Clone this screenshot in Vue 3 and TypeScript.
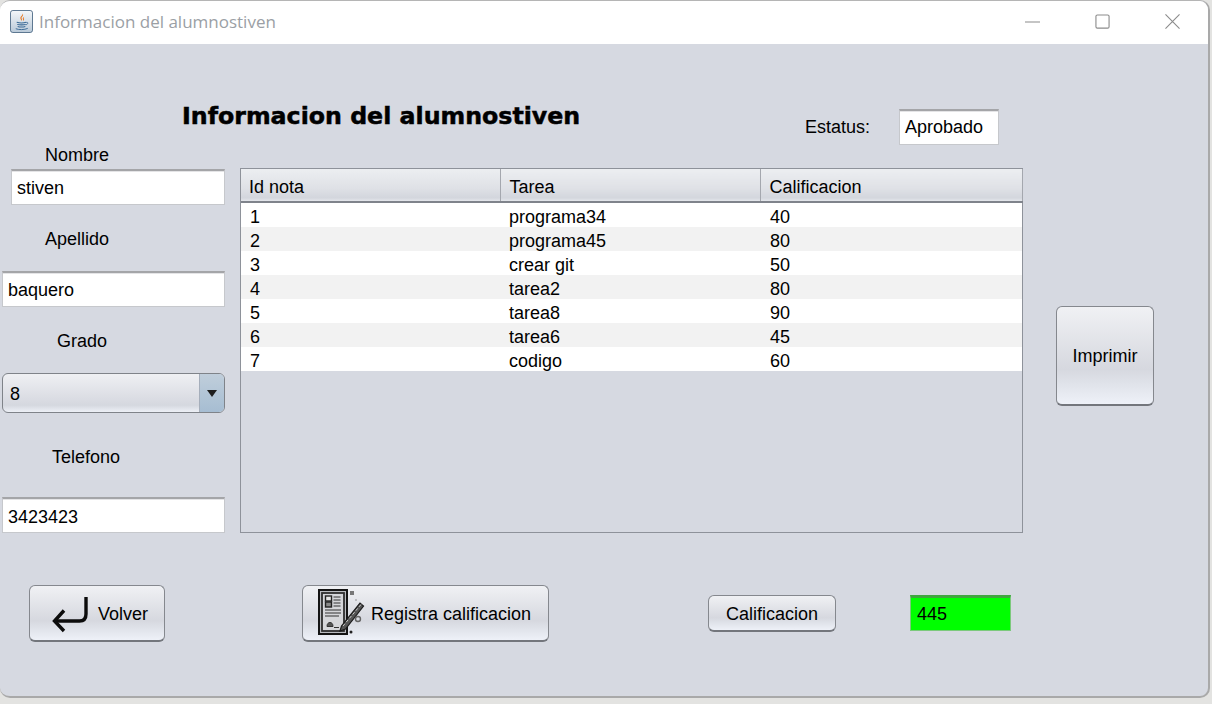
<template>
  <div class="window">
    <header class="titlebar">
      <svg class="java-icon" viewBox="0 0 24 24" aria-hidden="true">
        <defs>
          <linearGradient id="javaBg" x1="0" y1="0" x2="0" y2="1">
            <stop offset="0" stop-color="#f4f7fa" />
            <stop offset="1" stop-color="#b9c9d8" />
          </linearGradient>
        </defs>
        <rect x="0.5" y="0.5" width="23" height="23" rx="2.5" fill="url(#javaBg)" stroke="#56718c" />
        <path d="M13 3c1.500 2-3 3.500-2 6 .4 1 1.200 1.500 1.200 2.500 1.300-1.500-1-2.500.2-4.200C13.300 6 14.500 5 13 3z" fill="#e8761f" />
        <path d="M15 7c-1.500.8-2 1.600-1.400 2.800.3.6.2 1.100-.2 1.700 1.600-.8 1.500-1.800 1-2.700-.3-.6 0-1.200.6-1.800z" fill="#e8761f" />
        <path d="M7 12.800c2.500.8 7.500.8 10 0M7.500 15c2 .7 7 .7 9 0M8 17.200c2 .6 6 .6 8 0" fill="none" stroke="#3a6a96" stroke-width="1.100" />
        <path d="M6 19.500c3 1.300 9 1.300 12.500-.3" fill="none" stroke="#3a6a96" stroke-width="1" />
        <path d="M17 13c2-.6 2.500 1.500-.5 2.600" fill="none" stroke="#3a6a96" stroke-width="0.900" />
      </svg>
      <span class="titlebar-text">Informacion del alumnostiven</span>
      <div class="win-controls">
        <svg class="win-btn" viewBox="0 0 16 16" aria-hidden="true"><path d="M0 8.500h16" /></svg>
        <svg class="win-btn" viewBox="0 0 16 16" aria-hidden="true"><rect x="1" y="1" width="14" height="14" rx="1.500" /></svg>
        <svg class="win-btn" viewBox="0 0 16 16" aria-hidden="true"><path d="M0.500 0.500l15 15M15.500 0.500l-15 15" /></svg>
      </div>
    </header>

    <section class="top">
      <h1 class="heading">Informacion del alumnostiven</h1>
      <span class="status-label">Estatus:</span>
      <div class="field status-field">Aprobado</div>
    </section>

    <section class="middle">
      <div class="form">
        <label class="lbl lbl-nombre">Nombre</label>
        <div class="field field-nombre">stiven</div>
        <label class="lbl lbl-apellido">Apellido</label>
        <div class="field field-full">baquero</div>
        <label class="lbl lbl-grado">Grado</label>
        <div class="combo">
          <span class="combo-value">8</span>
          <span class="combo-arrow"></span>
        </div>
        <label class="lbl lbl-telefono">Telefono</label>
        <div class="field field-full field-phone">3423423</div>
      </div>

      <div class="table-wrap">
        <table class="grades">
          <colgroup>
            <col class="col-id" />
            <col class="col-task" />
            <col class="col-grade" />
          </colgroup>
          <thead>
            <tr>
              <th>Id nota</th>
              <th>Tarea</th>
              <th>Calificacion</th>
            </tr>
          </thead>
          <tbody>
            <tr v-for="row in rows" :key="row.id">
              <td>{{ row.id }}</td>
              <td>{{ row.tarea }}</td>
              <td>{{ row.nota }}</td>
            </tr>
          </tbody>
        </table>
      </div>

      <button class="btn btn-print" type="button">Imprimir</button>
    </section>

    <section class="bottom">
      <button class="btn btn-back" type="button">
        <svg class="back-icon" viewBox="0 0 40 40" aria-hidden="true">
          <path d="M36 4v17c0 4.500-2 7-6.500 7H5" fill="none" stroke="#0c0c0c" stroke-width="3.400" />
          <path d="M14 17.500 4.500 28l9.500 10" fill="none" stroke="#0c0c0c" stroke-width="3.400" />
        </svg>
        <span>Volver</span>
      </button>
      <button class="btn btn-register" type="button">
        <svg class="doc-icon" viewBox="0 0 50 48" aria-hidden="true">
          <rect x="1" y="1" width="28" height="44" fill="#b9bbc0" stroke="#141414" stroke-width="2" />
          <rect x="4" y="4" width="22" height="38" fill="#d5d6da" stroke="#2e2e2e" stroke-width="1.800" />
          <rect x="7.500" y="7" width="6" height="5" fill="#e8e8e8" stroke="#222" stroke-width="1.400" />
          <rect x="7.500" y="13" width="6" height="5" fill="#888" stroke="#222" stroke-width="1.400" />
          <path d="M15.500 8h7M15.500 11h7M15.500 14h7M15.500 17h7M7 21h16M7 24h16M7 27h14" stroke="#333" stroke-width="1" />
          <path d="M9 37.500c0-3 1.500-4 3-4s3 1 3 4zM16 38.500h5" fill="#555" stroke="#333" stroke-width="1" />
          <path d="M22 42l1.500-5L42 14l3.500 3-18 23z" fill="#555" stroke="#1c1c1c" stroke-width="1.200" />
          <path d="M25 37 43 15.500" stroke="#cfcfcf" stroke-width="1" stroke-dasharray="3 2" />
          <rect x="32" y="2" width="4" height="4" fill="#777" />
          <circle cx="40" cy="30" r="2.500" fill="none" stroke="#666" stroke-width="1.400" />
          <circle cx="33" cy="43" r="1.500" fill="#222" />
          <circle cx="38" cy="11" r="0.800" fill="#888" />
        </svg>
        <span>Registra calificacion</span>
      </button>
      <button class="btn btn-grade" type="button">Calificacion</button>
      <div class="field total-field">445</div>
    </section>
  </div>
</template>

<script setup lang="ts">
type Row = {
  id: number;
  tarea: string;
  nota: number;
};

const rows: Row[] = [
  { id: 1, tarea: "programa34", nota: 40 },
  { id: 2, tarea: "programa45", nota: 80 },
  { id: 3, tarea: "crear git", nota: 50 },
  { id: 4, tarea: "tarea2", nota: 80 },
  { id: 5, tarea: "tarea8", nota: 90 },
  { id: 6, tarea: "tarea6", nota: 45 },
  { id: 7, tarea: "codigo", nota: 60 },
];
</script>

<style>
html,
body {
  margin: 0;
  height: 704px;
  overflow: hidden;
  background: #e3e3e1;
}
</style>

<style scoped>
.window {
  box-sizing: border-box;
  width: 1210px;
  height: 698px;
  overflow: hidden;
  display: flex;
  flex-direction: column;
  background: #d6d9e1;
  border-top: 1px solid #b5b5b5;
  border-right: 2px solid #a9a9a9;
  border-bottom: 2px solid #a9a9a9;
  border-radius: 10px;
  font-family: "Liberation Sans", Arial, sans-serif;
  font-size: 18px;
  color: #000;
}

.titlebar {
  flex: none;
  height: 43px;
  display: flex;
  align-items: center;
  padding-left: 10px;
  background: #fff;
}

.java-icon {
  width: 23px;
  height: 23px;
  margin-top: -3px;
}

.titlebar-text {
  margin: -2px 0 0 6px;
  font-family: "Open Sans", sans-serif;
  font-size: 17px;
  color: #9b9fa5;
}

.win-controls {
  margin: -2px 0 0 auto;
  display: flex;
  align-items: center;
  gap: 55px;
  padding-right: 28px;
}

.win-btn {
  width: 15px;
  height: 15px;
  fill: none;
  stroke: #8c8c8c;
  stroke-width: 1.2;
}

.top {
  flex: none;
  height: 102px;
  display: flex;
  align-items: flex-start;
}

.heading {
  margin: 57px 0 0 182px;
  width: 623px;
  font-family: "DejaVu Sans", sans-serif;
  font-size: 23.7px;
  line-height: 30px;
  font-weight: 700;
  white-space: nowrap;
  -webkit-text-stroke: 0.5px #000;
}

.status-label {
  margin-top: 74px;
  width: 94px;
  line-height: 19px;
}

.field {
  box-sizing: border-box;
  height: 36px;
  padding: 2px 0 0 5px;
  display: flex;
  align-items: center;
  background: #fff;
  border: 1px solid #c6c8cc;
  border-top: 2px solid #a4a5a8;
  box-shadow: inset 0 1px 0 #e4e4e6;
}

.status-field {
  margin-top: 65px;
  width: 100px;
  padding-top: 0;
}

.middle {
  flex: none;
  display: flex;
  align-items: flex-start;
  height: 387px;
}

.form {
  flex: none;
  width: 225px;
  display: flex;
  flex-direction: column;
}

.lbl {
  line-height: 19px;
}

.lbl-nombre {
  margin: 0 0 4px 45px;
}

.lbl-apellido {
  margin: 25px 0 22px 45px;
}

.lbl-grado {
  margin: 25px 0 22px 57px;
}

.lbl-telefono {
  margin: 35px 0 30px 52px;
}

.field-nombre {
  margin-left: 11px;
}

.field-full {
  margin-left: 2px;
}

.field-phone {
  padding-top: 4px;
}

.combo {
  box-sizing: border-box;
  height: 40px;
  margin-left: 2px;
  display: flex;
  align-items: center;
  justify-content: space-between;
  overflow: hidden;
  border: 1px solid #7f8389;
  border-radius: 6px;
  background: linear-gradient(#eff0f3 0%, #d9dbe2 70%, #d5d8df 82%, #edf0f6 100%);
}

.combo-value {
  padding: 2px 0 0 7px;
}

.combo-arrow {
  align-self: stretch;
  width: 24px;
  display: flex;
  align-items: center;
  justify-content: center;
  border-left: 1px solid #a5aebb;
  background: linear-gradient(#c0cedb, #a6bdd2);
}

.combo-arrow::after {
  content: "";
  border-left: 5px solid transparent;
  border-right: 5px solid transparent;
  border-top: 7px solid #1e1e1e;
}

.table-wrap {
  box-sizing: border-box;
  flex: none;
  width: 783px;
  height: 365px;
  margin: 22px 0 0 15px;
  border: 1px solid #8e929a;
}

.grades {
  width: 781px;
  table-layout: fixed;
  border-collapse: collapse;
}

.col-id {
  width: 259px;
}

.col-task {
  width: 260px;
}

.col-grade {
  width: 262px;
}

.grades th {
  box-sizing: border-box;
  height: 33px;
  padding: 4px 0 0 9px;
  text-align: left;
  font-weight: 400;
  background: linear-gradient(#eceef1 0%, #dfe1e6 60%, #d3d6dd 90%, #e4e6eb 100%);
  border-right: 1px solid #a4a7ae;
  border-bottom: 2px solid #7f838b;
}

.grades th:first-child {
  padding-left: 8px;
}

.grades td {
  height: 20px;
  padding: 4px 0 0 10px;
  line-height: 20px;
}

.grades td:nth-child(-n + 2) {
  padding-left: 9px;
}

.grades tbody tr:nth-child(odd) {
  background: #fff;
}

.grades tbody tr:nth-child(even) {
  background: #f2f2f2;
}

.btn {
  box-sizing: border-box;
  display: flex;
  align-items: center;
  justify-content: center;
  padding: 2px 0 0;
  font: inherit;
  color: #000;
  border: 1px solid #85888e;
  border-bottom: 2px solid #73767c;
  border-radius: 6px;
  background: linear-gradient(#f0f1f4 0%, #d6d8df 64%, #dfe2e9 78%, #eef1f8 100%);
}

.btn-print {
  flex: none;
  width: 98px;
  height: 100px;
  margin: 160px 0 0 33px;
}

.bottom {
  flex: none;
  display: flex;
  align-items: flex-start;
  margin-top: 52px;
}

.btn-back {
  width: 136px;
  height: 57px;
  margin-left: 29px;
  justify-content: flex-start;
  padding-left: 20px;
  gap: 8px;
}

.back-icon {
  width: 40px;
  height: 40px;
  margin-top: -2px;
}

.btn-register {
  width: 247px;
  height: 57px;
  margin-left: 137px;
  justify-content: flex-start;
  padding-left: 15px;
  gap: 3px;
}

.doc-icon {
  width: 50px;
  height: 48px;
  margin-top: -2px;
}

.btn-grade {
  width: 128px;
  height: 37px;
  margin: 10px 0 0 159px;
}

.total-field {
  width: 101px;
  margin: 10px 0 0 74px;
  padding: 0 0 0 6px;
  background: #00ff00;
  border-color: #7cc97c;
  border-top: 3px solid #3fa63f;
  box-shadow: none;
}
</style>
